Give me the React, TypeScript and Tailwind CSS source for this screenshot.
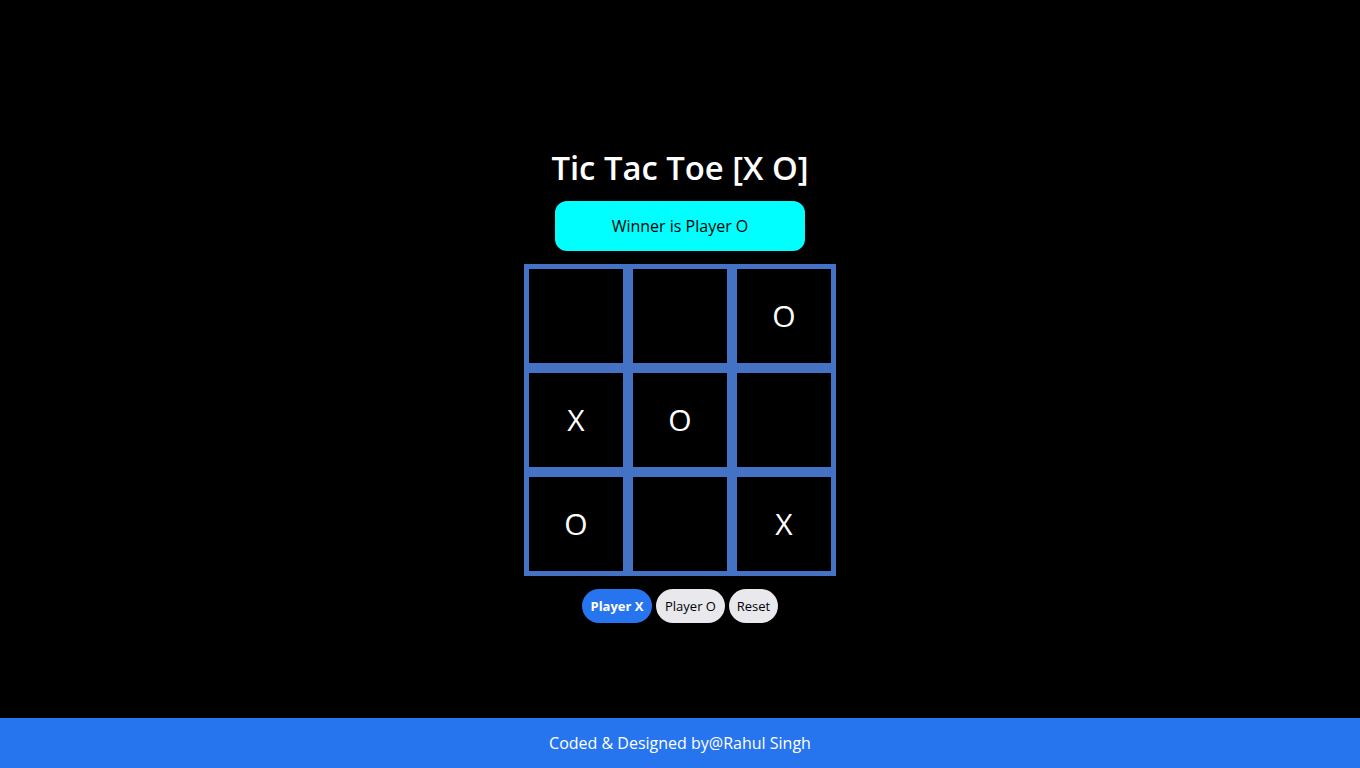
import React from "react";

const board = ["", "", "O", "X", "O", "", "O", "", "X"];

export default function App() {
  return (
    <div className="min-h-screen bg-black flex flex-col" style={{ fontFamily: '"Open Sans", sans-serif' }}>
      <div className="flex-1 flex flex-col items-center pt-[146px]">
        <h1 className="text-white text-[32.8px] leading-[44px] font-semibold">Tic Tac Toe [X O]</h1>
        <div className="mt-[11px] w-[250px] h-[50px] rounded-[12px] bg-[#00ffff] flex items-center justify-center text-black text-[16px]">
          Winner is Player O
        </div>
        <div className="mt-[13px] grid grid-cols-[repeat(3,104px)]">
          {board.map((v, i) => (
            <div
              key={i}
              className="w-[104px] h-[104px] border-[5px] border-[#4472c4] flex items-center justify-center text-white text-[30px] pb-[2px]"
            >
              {v}
            </div>
          ))}
        </div>
        <div className="mt-[13px] flex gap-[4px]">
          <button className="h-[34px] w-[70px] rounded-full bg-[#2775ee] text-white font-bold text-[13px] pt-[1px]">Player X</button>
          <button className="h-[34px] w-[69px] rounded-full bg-[#e9e9ed] text-black text-[13px] pt-[1px]">Player O</button>
          <button className="h-[34px] w-[49px] rounded-full bg-[#e9e9ed] text-black text-[13px] pt-[1px]">Reset</button>
        </div>
      </div>
      <footer className="h-[50px] bg-[#2775ee] flex items-center justify-center text-white text-[16px]">
        Coded &amp; Designed by@Rahul Singh
      </footer>
    </div>
  );
}
